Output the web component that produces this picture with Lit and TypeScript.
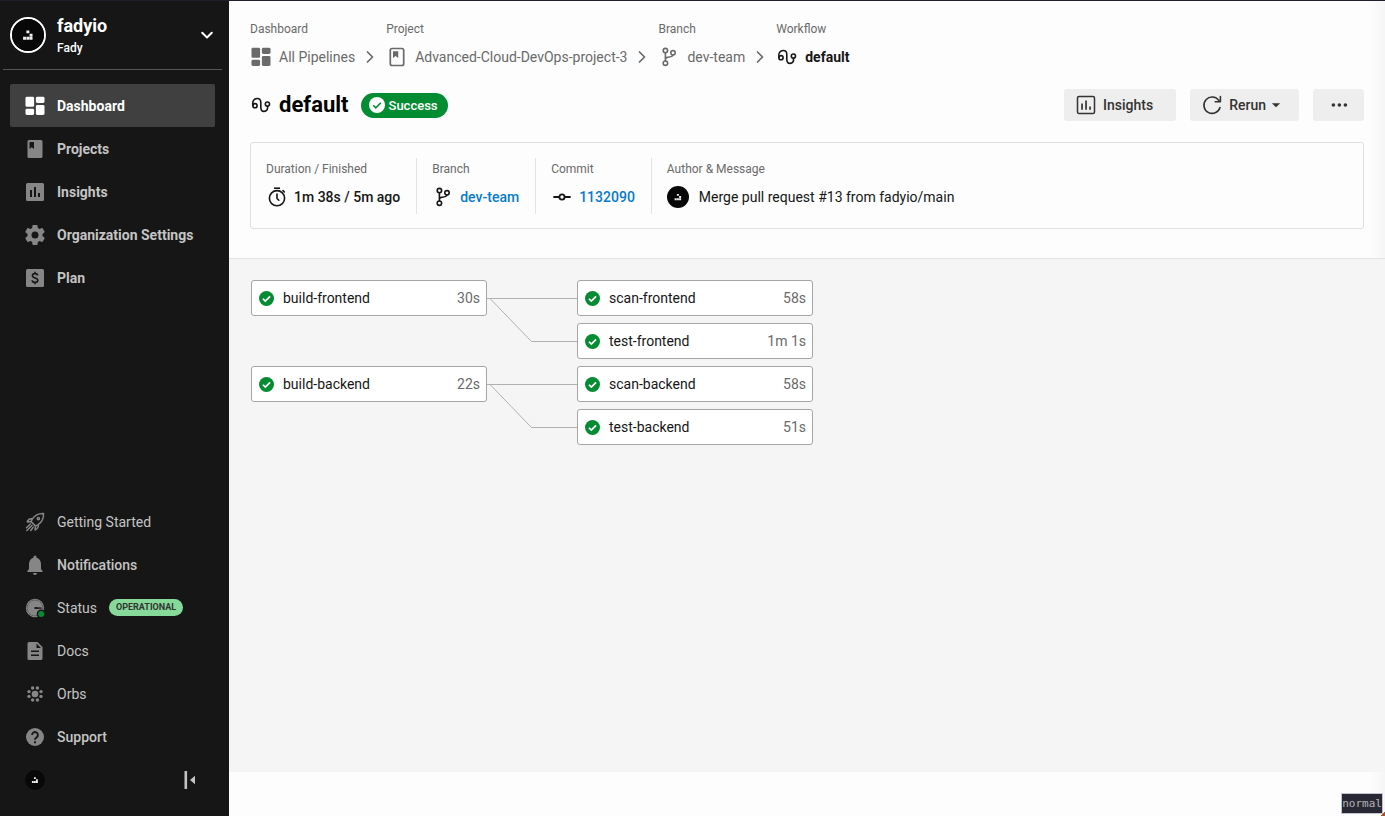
import { LitElement, html, svg, css, nothing, TemplateResult } from "lit";
import { customElement, property } from "lit/decorators.js";
import { classMap } from "lit/directives/class-map.js";

const stroke = (w: number, body: TemplateResult) =>
  svg`<g fill="none" stroke="currentColor" stroke-width=${w} stroke-linecap="round" stroke-linejoin="round">${body}</g>`;

const icons: Record<string, TemplateResult> = {
  dashboard: svg`<rect x="2.500" y="2.800" width="8.600" height="10" rx="1.400"/><rect x="2.500" y="14.800" width="8.600" height="6.200" rx="1.400"/><rect x="12.900" y="2.800" width="8.600" height="6.200" rx="1.400"/><rect x="12.900" y="11" width="8.600" height="10" rx="1.400"/>`,
  book: svg`<path fill-rule="evenodd" d="M6 3h12a1.5 1.5 0 0 1 1.500 1.500v15A1.500 1.500 0 0 1 18 21H6a1.500 1.500 0 0 1-1.500-1.500v-15A1.500 1.500 0 0 1 6 3zM6.500 5v7l2.200-1.700L11 12V5z"/>`,
  bookLine: svg`${stroke(1.7, svg`<rect x="5.300" y="3.500" width="13.400" height="17" rx="1.800"/>`)}<path d="M8 6.300h5.200v6.700l-2.600-2.100L8 13z"/>`,
  chart: svg`<path fill-rule="evenodd" d="M4.500 3h15A1.500 1.500 0 0 1 21 4.500v15a1.500 1.500 0 0 1-1.500 1.500h-15A1.500 1.500 0 0 1 3 19.500v-15A1.500 1.500 0 0 1 4.500 3zM7 10v7h2v-7zm4-3v10h2V7zm4 6v4h2v-4z"/>`,
  chartLine: svg`${stroke(1.5, svg`<rect x="3.500" y="3.500" width="17" height="17" rx="1.600"/>`)}<path d="M7.200 10.500h1.700v6.300H7.200zM11.200 7.500h1.700v9.300h-1.700zM15.200 13.500h1.700v3.300h-1.700z"/>`,
  gear: svg`<path d="M19.430 12.980c.04-.32.07-.64.07-.98s-.03-.66-.07-.98l2.110-1.650c.19-.15.24-.42.12-.64l-2-3.460c-.12-.22-.39-.3-.61-.22l-2.490 1c-.52-.4-1.080-.73-1.690-.98l-.38-2.650A.49.49 0 0 0 14 2h-4c-.25 0-.46.18-.49.42l-.38 2.650c-.61.25-1.170.59-1.690.98l-2.490-1c-.23-.09-.49 0-.61.22l-2 3.460c-.13.22-.07.49.12.64l2.110 1.650c-.04.32-.07.65-.07.98s.03.66.07.98l-2.110 1.650c-.19.15-.24.42-.12.64l2 3.460c.12.22.39.3.61.22l2.490-1c.52.4 1.080.73 1.690.98l.38 2.650c.03.24.24.42.49.42h4c.25 0 .46-.18.49-.42l.38-2.650c.61-.25 1.170-.59 1.690-.98l2.490 1c.23.09.49 0 .61-.22l2-3.460c.12-.22.07-.49-.12-.64zM12 15.500a3.500 3.500 0 1 1 0-7 3.500 3.500 0 0 1 0 7z"/>`,
  plan: svg`<rect x="3" y="3" width="18" height="18" rx="1.500"/><path d="M14.600 9.600c0-1.300-1.100-2-2.600-2s-2.600.8-2.600 2.100c0 3 5.400 1.500 5.400 4.500 0 1.400-1.200 2.200-2.800 2.200s-2.800-.8-2.800-2.200M12 5.800v1.800M12 16.400v1.800" fill="none" stroke="#161616" stroke-width="1.600"/>`,
  rocket: stroke(1.5, svg`<path d="M20.500 3.500c-5-.2-8.600 1.500-11.300 5.700L8 11.600l4.500 4.500 2.400-1.300c4.200-2.700 5.900-6.300 5.600-11.300zM9.200 8.800c-2.400-.6-4 .6-5 3.100l3.800-.3M15.200 14.800c.6 2.400-.6 4-3.100 5.200l.4-3.900M7.300 14l-3.800 3.800M8.900 15.500l-5 5M10.200 17.200l-2.400 3.300"/><circle cx="15.400" cy="8.600" r="1.100"/>`),
  bell: svg`<path d="M12 22a2 2 0 0 0 2-2h-4a2 2 0 0 0 2 2zm6-6v-5c0-3.070-1.640-5.640-4.500-6.320V4a1.500 1.500 0 0 0-3 0v.68C7.630 5.360 6 7.920 6 11v5l-1.600 2c-.3.500 0 1 .5 1h14.200c.5 0 .8-.5.5-1z"/>`,
  status: svg`<circle cx="12" cy="12" r="9.200"/><circle cx="12" cy="12" r="7.800" fill="none" stroke="#161616" stroke-width=".9" stroke-dasharray=".9 1.100" opacity=".8"/><path d="M11.500 11l7 .4v1.300l-7 .2z" fill="#161616"/><circle cx="18.200" cy="18" r="4.500" fill="#161616"/><circle cx="18.200" cy="18" r="3" fill="#048c33"/>`,
  doc: svg`<path fill-rule="evenodd" d="M6 3h8.500l5 5v11.500A1.500 1.500 0 0 1 18 21H6a1.500 1.500 0 0 1-1.500-1.500v-15A1.500 1.500 0 0 1 6 3zm7.500 1.500V9H18zM8 11.500V13h8v-1.500zM8 15.500V17h8v-1.500z"/>`,
  orbs: svg`<circle cx="12" cy="12" r="3.300"/><circle cx="9.600" cy="6" r="1.700"/><circle cx="14.400" cy="6" r="1.700"/><circle cx="9.600" cy="18" r="1.700"/><circle cx="14.400" cy="18" r="1.700"/><circle cx="6" cy="9.600" r="1.700"/><circle cx="6" cy="14.400" r="1.700"/><circle cx="18" cy="9.600" r="1.700"/><circle cx="18" cy="14.400" r="1.700"/>`,
  help: svg`<circle cx="12" cy="12" r="9"/><path d="M9.100 10a2.900 2.900 0 1 1 4.700 2.200c-1 .8-1.800 1.200-1.800 2.600M12 16.300v2" fill="none" stroke="#161616" stroke-width="1.900"/>`,
  collapse: svg`<path d="M5.500 3h2.600v18H5.500zM16 7.800v8.400L11 12z"/>`,
  down: stroke(2, svg`<path d="M7.200 9.700l4.800 4.800 4.800-4.800"/>`),
  right: stroke(1.7, svg`<path d="M9.500 7l5 5-5 5"/>`),
  branch: stroke(1.6, svg`<circle cx="8.400" cy="5.600" r="2.200"/><circle cx="8.400" cy="18.200" r="2.200"/><circle cx="16" cy="7.800" r="2.200"/><path d="M8.400 8v8M8.400 14.200c0-1.400.9-1.800 2.600-2 3-.3 4.500-.6 4.900-2.100"/>`),
  workflow: stroke(1.6, svg`<circle cx="6" cy="12.700" r="2.100"/><path d="M3.900 12.200C3.100 8.300 5 5.500 8.300 5.500c2.600 0 3.500 1.500 3.500 4v4.700c0 2.700 1 4.200 3.200 4.200 2.700 0 3.900-2.200 3.500-5"/><circle cx="18.400" cy="11.100" r="2.100"/>`),
  clock: svg`${stroke(1.6, svg`<circle cx="12" cy="13.200" r="7.600"/><path d="M12 9v4.400l1.800 1.800M18 5.600l1.400 1.400"/>`)}<path d="M9 2.400h6V4H9z"/>`,
  commit: stroke(1.8, svg`<circle cx="12" cy="12" r="2.600"/><path d="M4 12h5.200M14.800 12H20"/>`),
  rerun: stroke(1.6, svg`<path d="M18.800 7.400A8.200 8.200 0 1 0 20 14.500M20.400 3.600v5.200h-5.200"/>`),
  caret: svg`<path d="M6.500 9.500h11L12 15z"/>`,
  dots: svg`<circle cx="4.500" cy="12" r="2.400"/><circle cx="12.500" cy="12" r="2.400"/><circle cx="20.500" cy="12" r="2.400"/>`,
  avatar: svg`<circle cx="12" cy="12" r="12" fill="#080808"/><path fill="#eee" d="M10.800 8.700h2.200v2h-2.200zM13.200 11h2.200v2.200h-2.200zM8.300 13.300h2.200v2.200H8.300zM10.800 13.300h2.200v2.200h-2.200zM13.200 13.300h2.200v2.200h-2.200z"/>`,
  okGreen: svg`<circle cx="12" cy="12" r="12" fill="#048c33"/><path d="M6.300 12.400l3.800 3.800 7.600-7.600" fill="none" stroke="#fff" stroke-width="2.800"/>`,
  okWhite: svg`<circle cx="12" cy="12" r="12" fill="#fff"/><path d="M6.300 12.400l3.800 3.800 7.600-7.600" fill="none" stroke="#048c33" stroke-width="2.400"/>`,
};

@customElement("ci-icon")
class CiIcon extends LitElement {
  @property() name = "";
  static styles = css`
    :host { display: inline-flex; flex: none; width: 24px; height: 24px; }
    svg { width: 100%; height: 100%; fill: currentColor; overflow: visible; }
  `;
  render() {
    return html`<svg viewBox="0 0 24 24" aria-hidden="true">${icons[this.name]}</svg>`;
  }
}

type NavItem = { icon: string; label: string; strong?: boolean; active?: boolean; badge?: string };

@customElement("ci-sidebar")
class CiSidebar extends LitElement {
  static styles = css`
    :host { display: flex; flex-direction: column; background: #161616; color: #c4c4c4; }
    button { display: flex; font: inherit; color: inherit; background: none; border: 0; padding: 0; text-align: left; cursor: pointer; }
    .org { align-items: center; gap: 11px; margin: 0 7px 0 3px; padding: 0 3px 0 7px; height: 69px; border-bottom: 1px solid #555; color: #fff; }
    .avatar { box-sizing: border-box; width: 36px; height: 36px; border: 2px solid #fff; border-radius: 50%; }
    .names { flex: 1; display: flex; flex-direction: column; gap: 3px; }
    .name { font-size: 18px; line-height: 22px; font-weight: 700; }
    .sub { font-size: 12px; line-height: 16px; font-weight: 500; }
    nav { display: flex; flex-direction: column; padding: 14px 14px 0 10px; }
    .lower { margin-top: auto; padding-top: 0; }
    .item { display: flex; align-items: center; gap: 10px; height: 43px; padding-left: 13px; border-radius: 2px; color: inherit; text-decoration: none; font-size: 14px; line-height: 20px; }
    .item ci-icon { color: #868686; }
    .strong { font-weight: 700; }
    .mid { font-weight: 500; }
    .active { background: #404040; color: #fff; }
    .item.active ci-icon { color: #fff; }
    .badge { margin-left: 2px; padding: 0 7px; border-radius: 9px; background: #86d999; color: #333; font-size: 9px; line-height: 17px; font-weight: 700; }
    .foot { display: flex; justify-content: space-between; align-items: center; height: 43px; padding: 0 26px 15px 25px; }
    .me { width: 20px; height: 20px; }
  `;
  main: NavItem[] = [
    { icon: "dashboard", label: "Dashboard", active: true },
    { icon: "book", label: "Projects" },
    { icon: "chart", label: "Insights" },
    { icon: "gear", label: "Organization Settings" },
    { icon: "plan", label: "Plan" },
  ];
  lower: NavItem[] = [
    { icon: "rocket", label: "Getting Started" },
    { icon: "bell", label: "Notifications", strong: true },
    { icon: "status", label: "Status", badge: "OPERATIONAL" },
    { icon: "doc", label: "Docs" },
    { icon: "orbs", label: "Orbs" },
    { icon: "help", label: "Support", strong: true },
  ];
  item(i: NavItem, primary: boolean) {
    return html`<a href="#" class=${classMap({ item: true, active: !!i.active, strong: primary, mid: !!i.strong })}>
      <ci-icon name=${i.icon}></ci-icon><span>${i.label}</span>${i.badge ? html`<span class="badge">${i.badge}</span>` : nothing}
    </a>`;
  }
  render() {
    return html`
      <button class="org" aria-label="Switch organization">
        <ci-icon class="avatar" name="avatar"></ci-icon>
        <span class="names"><span class="name">fadyio</span><span class="sub">Fady</span></span>
        <ci-icon name="down"></ci-icon>
      </button>
      <nav>${this.main.map((i) => this.item(i, true))}</nav>
      <nav class="lower">${this.lower.map((i) => this.item(i, false))}</nav>
      <div class="foot">
        <ci-icon class="me" name="avatar"></ci-icon>
        <button aria-label="Collapse sidebar"><ci-icon name="collapse"></ci-icon></button>
      </div>
    `;
  }
}

@customElement("ci-header")
class CiHeader extends LitElement {
  static styles = css`
    :host { display: block; padding: 20px 21px 29px; border-bottom: 1px solid #e3e3e3; color: #161616; }
    .crumbs { display: flex; }
    .label { font-size: 12px; line-height: 16px; color: #6a6a6a; }
    .crumb { display: flex; flex-direction: column; gap: 8px; }
    .row { display: flex; align-items: center; height: 24px; font-size: 14px; color: #6a6a6a; }
    .row a { display: flex; align-items: center; gap: 6px; margin-left: -1px; color: inherit; text-decoration: none; white-space: nowrap; }
    .row .current { color: #161616; font-weight: 700; }
    .sep { margin: 0 4px 0 3px; }
    .title { display: flex; align-items: center; height: 32px; margin-top: 20px; }
    .title > ci-icon { margin: 0 6px 0 -1px; }
    h1 { margin: 0 12px 0 0; font-size: 22px; line-height: 28px; font-weight: 700; color: #000; }
    .success { display: flex; align-items: center; gap: 4px; padding: 0 10px 0 8px; border-radius: 13px; background: #048c33; color: #fff; font-size: 13px; line-height: 25px; font-weight: 500; }
    .success ci-icon { width: 16px; height: 16px; }
    .actions { margin-left: auto; display: flex; gap: 14px; }
    button { display: flex; align-items: center; height: 32px; border: 0; border-radius: 3px; padding: 0 10px; background: #eee; color: #333; font-family: inherit; font-size: 14px; font-weight: 500; cursor: pointer; }
    .insights { gap: 5px; padding-right: 23px; }
    .rerun { gap: 5px; }
    .caret { width: 18px; height: 18px; margin: 0 4px 0 -4px; }
    .more { width: 51px; justify-content: center; }
    .more ci-icon { width: 18px; height: 18px; }
    .card { display: flex; margin-top: 21px; padding: 15px 0 14px; border: 1px solid #e0e0e0; border-radius: 3px; }
    .cell { padding: 3px 16px 5px 15px; border-right: 1px solid #e3e3e3; }
    .cell:last-child { border: 0; }
    .value { display: flex; align-items: center; gap: 5px; height: 24px; margin-top: 8px; font-size: 14px; font-weight: 500; }
    .value > ci-icon { margin-left: -1px; }
    .value a { color: #057bcb; text-decoration: none; }
    .value .author { width: 22px; height: 22px; margin: 0 5px 0 0; }
    .message { font-weight: 400; }
  `;
  crumb(label: string, icon: string, text: string, last = false) {
    return html`<div class="crumb">
      <span class="label">${label}</span>
      <div class="row">
        <a href="#" class=${last ? "current" : ""}><ci-icon name=${icon}></ci-icon>${text}</a>
        ${last ? nothing : html`<ci-icon class="sep" name="right"></ci-icon>`}
      </div>
    </div>`;
  }
  render() {
    return html`
      <nav class="crumbs">
        ${this.crumb("Dashboard", "dashboard", "All Pipelines")}
        ${this.crumb("Project", "bookLine", "Advanced-Cloud-DevOps-project-3")}
        ${this.crumb("Branch", "branch", "dev-team")}
        ${this.crumb("Workflow", "workflow", "default", true)}
      </nav>
      <div class="title">
        <ci-icon name="workflow"></ci-icon>
        <h1>default</h1>
        <span class="success"><ci-icon name="okWhite"></ci-icon>Success</span>
        <div class="actions">
          <button class="insights"><ci-icon name="chartLine"></ci-icon>Insights</button>
          <button class="rerun"><ci-icon name="rerun"></ci-icon>Rerun <ci-icon class="caret" name="caret"></ci-icon></button>
          <button class="more" aria-label="More actions"><ci-icon name="dots"></ci-icon></button>
        </div>
      </div>
      <section class="card">
        <div class="cell"><div class="label">Duration / Finished</div><div class="value"><ci-icon name="clock"></ci-icon>1m 38s / 5m ago</div></div>
        <div class="cell"><div class="label">Branch</div><div class="value"><ci-icon name="branch"></ci-icon><a href="#">dev-team</a></div></div>
        <div class="cell"><div class="label">Commit</div><div class="value"><ci-icon name="commit"></ci-icon><a href="#">1132090</a></div></div>
        <div class="cell"><div class="label">Author &amp; Message</div><div class="value"><ci-icon class="author" name="avatar"></ci-icon><span class="message">Merge pull request #13 from fadyio/main</span></div></div>
      </section>
    `;
  }
}

@customElement("ci-graph")
class CiGraph extends LitElement {
  static styles = css`
    :host { display: block; padding: 21px 22px; background: #f5f5f5; }
    .grid { display: grid; grid-template-columns: 236px 90px 236px; grid-template-rows: repeat(4, 36px); row-gap: 7px; }
    .job { box-sizing: border-box; display: flex; align-items: center; gap: 9px; padding: 0 6px 0 7px; border: 1px solid #a6a6a6; border-radius: 3px; background: #fff; color: #161616; font-size: 14px; text-decoration: none; }
    .job ci-icon { width: 15px; height: 15px; }
    .time { margin-left: auto; color: #6a6a6a; }
    .source { grid-column: 1; }
    .target { grid-column: 3; }
    .r1 { grid-row: 1; } .r2 { grid-row: 2; } .r3 { grid-row: 3; } .r4 { grid-row: 4; }
    .edges { grid-column: 2; height: 79px; width: 90px; }
    .top { grid-row: 1 / span 2; }
    .bottom { grid-row: 3 / span 2; }
  `;
  jobs = [
    { name: "build-frontend", time: "30s", cls: "source r1" },
    { name: "scan-frontend", time: "58s", cls: "target r1" },
    { name: "test-frontend", time: "1m 1s", cls: "target r2" },
    { name: "build-backend", time: "22s", cls: "source r3" },
    { name: "scan-backend", time: "58s", cls: "target r3" },
    { name: "test-backend", time: "51s", cls: "target r4" },
  ];
  edges(pos: string) {
    return html`<svg class="edges ${pos}" viewBox="0 0 90 79" fill="none" stroke="#b0b0b0" aria-hidden="true">
      <path d="M0 18.500H90M3 18.500L44.500 61.500H90"/>
    </svg>`;
  }
  render() {
    return html`<div class="grid">
      ${this.edges("top")}${this.edges("bottom")}
      ${this.jobs.map((j) => html`<a href="#" class="job ${j.cls}"><ci-icon name="okGreen"></ci-icon><span>${j.name}</span><span class="time">${j.time}</span></a>`)}
    </div>`;
  }
}

@customElement("app-root")
class AppRoot extends LitElement {
  static styles = css`
    :host { position: relative; box-sizing: border-box; display: grid; grid-template-columns: 229px minmax(0, 1fr); min-height: 100vh; border-top: 1px solid #1e1e2e; font-family: Roboto, sans-serif; background: #fdfdfd; }
    main { display: flex; flex-direction: column; background: linear-gradient(to left, #f6f6f6, #fdfdfd 16px); }
    ci-graph { flex: 1; margin-bottom: 44px; }
    .mode { position: absolute; right: 2px; bottom: 2px; border: 1px solid #c4c4cc; background: #282834; color: #b4b4b4; font: 11px/19px "DejaVu Sans Mono", monospace; }
    .corner { position: absolute; right: 0; bottom: 0; width: 4px; height: 4px; background: linear-gradient(135deg, transparent 50%, #b84a1c 50%); }
  `;
  render() {
    return html`
      <ci-sidebar></ci-sidebar>
      <main><ci-header></ci-header><ci-graph></ci-graph></main>
      <span class="mode">normal</span><span class="corner"></span>
    `;
  }
}
